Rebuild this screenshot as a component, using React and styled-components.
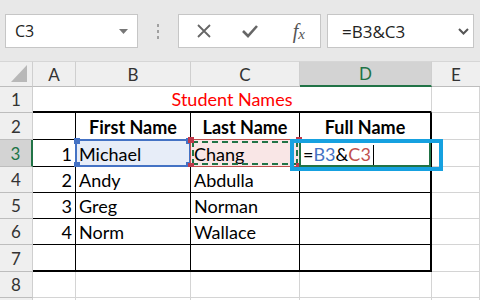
import styled, { createGlobalStyle } from 'styled-components';

const Global = createGlobalStyle`
  html, body { margin: 0; padding: 0; background: #fff; }
  body { font-family: "Lato", "Liberation Sans", sans-serif; }
`;

const COLS = '33px 43px 115px 109px 132px 48px';
const ROW_H = [26, 27, 27, 26, 26, 26, 27, 26, 26];

const thin = '1px solid #000';
const thick = '2px solid #000';
const grid = '1px solid #d4d4d4';

const Page = styled.div`
  width: 480px;
  height: 300px;
  overflow: hidden;
  position: relative;
`;

const Toolbar = styled.div`
  height: 61px;
  box-sizing: border-box;
  background: #e8e8e8;
  display: flex;
  align-items: flex-start;
  padding: 14px 0 0 5px;
  font-family: "Open Sans", "Liberation Sans", sans-serif;
`;

const Box = styled.div`
  width: ${p => p.$w}px;
  height: 34px;
  box-sizing: border-box;
  background: #fff;
  border: 1px solid #c6c6c6;
  display: flex;
  align-items: center;
  padding: 0 ${p => p.$pr || 0}px 0 ${p => p.$pl || 0}px;
  margin-left: ${p => p.$ml || 0}px;
  font-size: ${p => p.$fs || 16}px;
  color: #222;
`;

const Label = styled.span`
  flex: 1;
`;

const Dots = styled.div`
  width: 40px;
  height: 34px;
  display: flex;
  flex-direction: column;
  align-items: center;
  justify-content: center;
  gap: 3px;

  span {
    width: 2px;
    height: 3px;
    background: #a0a0a0;
  }
`;

const IconSlot = styled.div`
  width: 47px;
  display: flex;
  justify-content: center;
  align-items: center;
`;

const Fx = styled.span`
  font-family: "Liberation Serif", serif;
  font-style: italic;
  font-size: 20px;
  line-height: 1;
  color: #555;
  margin-left: 4px;

  small {
    font-size: 15px;
    margin-left: 0;
    position: relative;
    top: 1px;
  }
`;

const Sheet = styled.div`
  display: grid;
  grid-template-columns: ${COLS};
  grid-template-rows: 26px ${ROW_H.map(h => h + 'px').join(' ')};
`;

const Head = styled.div`
  box-sizing: border-box;
  position: relative;
  background: ${p => (p.$active ? '#d3d3d3' : '#efefef')};
  border-top: ${p => (p.$top ? '1px solid #d6d6d6' : 'none')};
  border-right: ${p => p.$br || '1px solid #cfcfcf'};
  border-bottom: ${p => p.$bb || '1px solid #bdbdbd'};
  display: flex;
  align-items: center;
  justify-content: center;
  font-size: 17px;
  color: ${p => (p.$active ? '#217346' : '#333')};
`;

const Corner = styled(Head)`
  &::after {
    content: '';
    position: absolute;
    right: 5px;
    bottom: 4px;
    width: 0;
    height: 0;
    border-left: 16px solid transparent;
    border-bottom: 17px solid #b8b8b8;
  }
`;

const Cell = styled.div`
  box-sizing: border-box;
  position: relative;
  grid-column: ${p => p.$span || 'auto'};
  background: ${p => p.$bg || '#fff'};
  border-right: ${p => p.$br || grid};
  border-bottom: ${p => p.$bb || grid};
  display: flex;
  align-items: flex-end;
  justify-content: ${p => p.$align || 'flex-start'};
  padding: 0 3px 1px 3px;
  font-size: 18px;
  font-weight: ${p => (p.$bold ? 700 : 400)};
  color: ${p => p.$color || '#000'};
  white-space: nowrap;
`;

const RefBox = styled.div`
  position: absolute;
  top: -1px;
  left: -1px;
  right: -1px;
  bottom: -1px;
  border: ${p => p.$w || 2}px solid ${p => p.$c};
  pointer-events: none;
`;

const Marquee = styled.div`
  position: absolute;
  inset: 1px;
  border: 2px dashed #217346;
`;

const Handle = styled.span`
  position: absolute;
  width: 6px;
  height: 6px;
  background: ${p => p.$c};
  ${p => (p.$v === 't' ? 'top: -3px;' : 'bottom: -3px;')}
  ${p => (p.$h === 'l' ? 'left: -3px;' : 'right: -3px;')}
`;

const Callout = styled.div`
  position: absolute;
  left: -10px;
  top: -1px;
  width: 153px;
  height: 32px;
  box-sizing: border-box;
  border: 4px solid #16a1e0;
  z-index: 3;
`;

const Caret = styled.span`
  display: inline-block;
  width: 1px;
  height: 21px;
  background: #000;
  margin-left: 2px;
  margin-bottom: -1px;
`;

const Ref = styled.span`
  color: ${p => p.$c};
`;

const XIcon = () => (
  <svg width="16" height="16" viewBox="0 0 16 16">
    <path d="M2 2 L14 14 M14 2 L2 14" stroke="#666" strokeWidth="1.8" fill="none" />
  </svg>
);

const CheckIcon = () => (
  <svg width="18" height="16" viewBox="0 0 18 16">
    <path d="M2 8 L7 13 L16 3" stroke="#666" strokeWidth="2.6" fill="none" />
  </svg>
);

const Caret3 = () => (
  <svg width="9" height="5" viewBox="0 0 9 5">
    <path d="M0 0 L9 0 L4.5 5 Z" fill="#777" />
  </svg>
);

const Chevron = () => (
  <svg width="11" height="7" viewBox="0 0 11 7">
    <path d="M1 1 L5.5 5.5 L10 1" stroke="#555" strokeWidth="2" fill="none" />
  </svg>
);

const handles = c => (
  <>
    <Handle $c={c} $v="t" $h="l" />
    <Handle $c={c} $v="t" $h="r" />
    <Handle $c={c} $v="b" $h="l" />
    <Handle $c={c} $v="b" $h="r" />
  </>
);

const people = [
  ['1', 'Michael', 'Chang'],
  ['2', 'Andy', 'Abdulla'],
  ['3', 'Greg', 'Norman'],
  ['4', 'Norm', 'Wallace'],
];

const tableBorders = (col, last) => ({
  $br: col === 3 ? thick : thin,
  $bb: last ? thick : thin,
});

const App = () => {
  const body = [];

  // row 2: headings
  body.push(
    <Head key="h2">2</Head>,
    <Cell key="a2" {...tableBorders(0)} />,
    <Cell key="b2" {...tableBorders(1)} $bold $align="center">First Name</Cell>,
    <Cell key="c2" {...tableBorders(2)} $bold $align="center">Last Name</Cell>,
    <Cell key="d2" {...tableBorders(3)} $bold $align="center">Full Name</Cell>,
    <Cell key="e2" />
  );

  people.forEach(([n, first, last], i) => {
    const r = i + 3;
    const active = r === 3;
    body.push(
      <Head key={'h' + r} $active={active} $br={active ? '2px solid #217346' : undefined}>
        {r}
      </Head>,
      <Cell key={'a' + r} {...tableBorders(0)} $align="flex-end">{n}</Cell>,
      <Cell key={'b' + r} {...tableBorders(1)} $bg={active ? '#e7edf8' : undefined}>
        {first}
        {active && (
          <RefBox $c="#4472c4">{handles('#4472c4')}</RefBox>
        )}
      </Cell>,
      <Cell key={'c' + r} {...tableBorders(2)} $bg={active ? '#f9e6e6' : undefined}>
        {last}
        {active && (
          <RefBox $c="#c0504d" $w={1}>
            <Marquee />
            {handles('#c0394b')}
          </RefBox>
        )}
      </Cell>,
      <Cell key={'d' + r} {...tableBorders(3)}>
        {active && (
          <>
            <span>
              =<Ref $c="#4472c4">B3</Ref>&amp;<Ref $c="#c0504d">C3</Ref>
            </span>
            <Caret />
            <RefBox $c="#217346" />
            <Callout />
          </>
        )}
      </Cell>,
      <Cell key={'e' + r} />
    );
  });

  body.push(
    <Head key="h7">7</Head>,
    <Cell key="a7" {...tableBorders(0, true)} />,
    <Cell key="b7" {...tableBorders(1, true)} />,
    <Cell key="c7" {...tableBorders(2, true)} />,
    <Cell key="d7" {...tableBorders(3, true)} />,
    <Cell key="e7" />
  );

  [8, 9].forEach(r => {
    body.push(
      <Head key={'h' + r}>{r === 8 ? r : ''}</Head>,
      <Cell key={'a' + r} />,
      <Cell key={'b' + r} />,
      <Cell key={'c' + r} />,
      <Cell key={'d' + r} />,
      <Cell key={'e' + r} />
    );
  });

  return (
    <Page>
      <Global />
      <Toolbar>
        <Box $w={133} $pl={9} $pr={9}>
          <Label>C3</Label>
          <Caret3 />
        </Box>
        <Dots>
          <span />
          <span />
          <span />
        </Dots>
        <Box $w={143} $pl={2}>
          <IconSlot><XIcon /></IconSlot>
          <IconSlot><CheckIcon /></IconSlot>
          <IconSlot><Fx>f<small>x</small></Fx></IconSlot>
        </Box>
        <Box $w={147} $ml={6} $pl={14} $pr={4} $fs={17}>
          <Label>=B3&amp;C3</Label>
          <Chevron />
        </Box>
      </Toolbar>
      <Sheet>
        <Corner $top />
        <Head $top>A</Head>
        <Head $top>B</Head>
        <Head $top>C</Head>
        <Head $top $active $bb="2px solid #217346">D</Head>
        <Head $top $br="none">E</Head>

        <Head>1</Head>
        <Cell $span="span 4" $align="center" $color="#ff0000" $bb={thick}>
          Student Names
        </Cell>
        <Cell />

        {body}
      </Sheet>
    </Page>
  );
};

export default App;
